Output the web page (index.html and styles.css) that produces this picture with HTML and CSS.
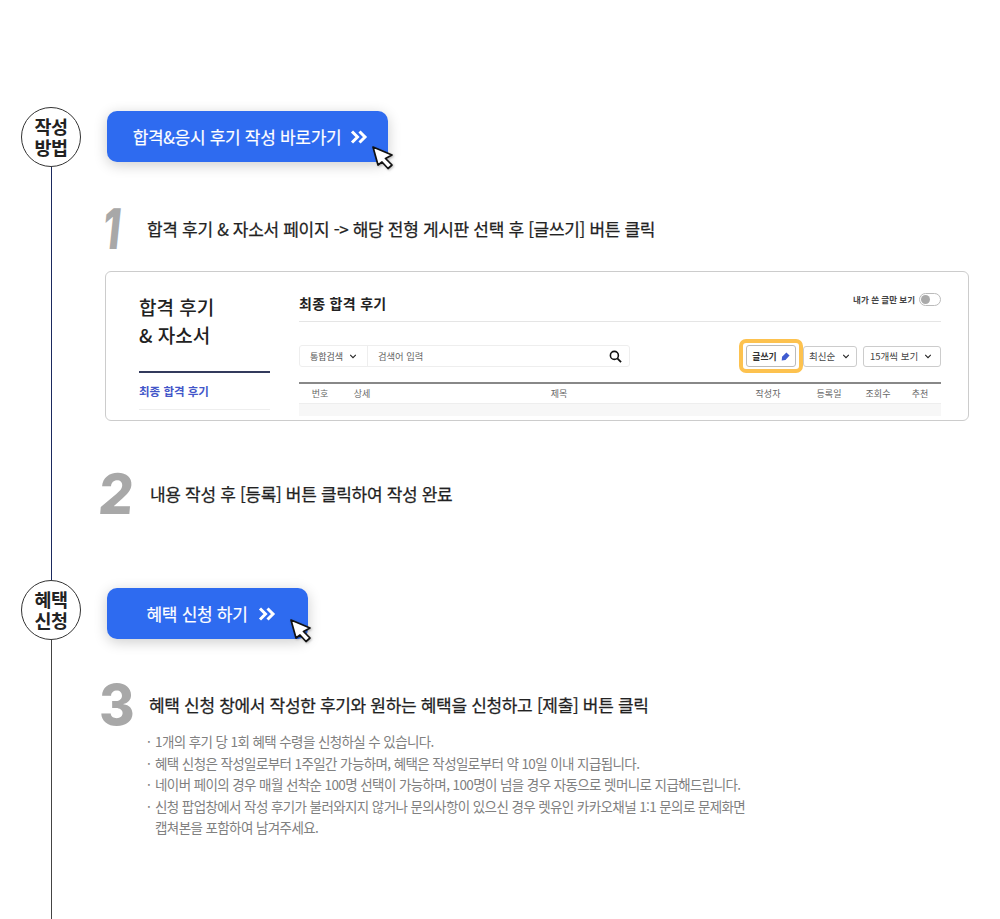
FILE: index.html
```html
<!DOCTYPE html>
<html lang="ko">
<head>
<meta charset="utf-8">
<title>후기 작성 방법</title>
<link rel="stylesheet" href="styles.css">
</head>
<body>
<main class="page">
  <section class="block block-first">
    <div class="rail">
      <div class="badge">작성<br>방법</div>
      <div class="rail-line rail-line-navy"></div>
    </div>
    <div class="content">
      <a class="cta cta-wide">
        <span>합격&amp;응시 후기 작성 바로가기</span>
        <svg class="chev" viewBox="0 0 18 14"><path d="M2 1.500 7.500 7 2 12.500M9.500 1.500 15 7 9.500 12.500" fill="none" stroke="#fff" stroke-width="3"/></svg>
        <svg class="cursor" viewBox="0 0 22 24"><path d="M1 1 20 9 13.500 12.500 20 19 16 22.500 10 16 6 19Z" fill="#fff" stroke="#111" stroke-width="1.700" stroke-linejoin="round"/></svg>
      </a>
      <div class="step step-one">
        <span class="num num-one">1</span>
        <p class="step-text">합격 후기 &amp; 자소서 페이지 -&gt; 해당 전형 게시판 선택 후 [글쓰기] 버튼 클릭</p>
      </div>
      <div class="card">
        <aside class="side">
          <h2 class="side-title">합격 후기<br>&amp; 자소서</h2>
          <div class="side-link">최종 합격 후기</div>
        </aside>
        <div class="board">
          <div class="board-head">
            <h3 class="board-title">최종 합격 후기</h3>
            <div class="mine">내가 쓴 글만 보기<span class="toggle"><i></i></span></div>
          </div>
          <div class="tools">
            <div class="search">
              <div class="search-type">통합검색
                <svg class="mini" viewBox="0 0 10 6"><path d="M1.500 1 5 4.500 8.500 1" fill="none" stroke="#222" stroke-width="1.300"/></svg>
              </div>
              <div class="search-input">검색어 입력</div>
              <svg class="glass" viewBox="0 0 14 14"><circle cx="5.800" cy="5.800" r="4.300" fill="none" stroke="#111" stroke-width="1.700"/><path d="M9 9 13 13" stroke="#111" stroke-width="1.900"/></svg>
            </div>
            <div class="write-ring">
              <div class="write">글쓰기
                <svg class="pen" viewBox="0 0 10 10"><path d="M6 .5 9.500 4 5 9 .8 9.500 1.200 5.200Z" fill="#3f5bd0"/></svg>
              </div>
            </div>
            <div class="select select-sort">최신순
              <svg class="mini" viewBox="0 0 10 6"><path d="M1.500 1 5 4.500 8.500 1" fill="none" stroke="#222" stroke-width="1.300"/></svg>
            </div>
            <div class="select select-count">15개씩 보기
              <svg class="mini" viewBox="0 0 10 6"><path d="M1.500 1 5 4.500 8.500 1" fill="none" stroke="#222" stroke-width="1.300"/></svg>
            </div>
          </div>
          <div class="thead">
            <span class="c-no">번호</span><span class="c-detail">상세</span><span class="c-title">제목</span><span class="c-author">작성자</span><span class="c-date">등록일</span><span class="c-views">조회수</span><span class="c-rec">추천</span>
          </div>
          <div class="tband"></div>
        </div>
      </div>
      <div class="step step-two">
        <span class="num num-two">2</span>
        <p class="step-text">내용 작성 후 [등록] 버튼 클릭하여 작성 완료</p>
      </div>
    </div>
  </section>
  <section class="block block-second">
    <div class="rail">
      <div class="badge">혜택<br>신청</div>
      <div class="rail-line"></div>
    </div>
    <div class="content">
      <a class="cta cta-narrow">
        <span>혜택 신청 하기</span>
        <svg class="chev" viewBox="0 0 18 14"><path d="M2 1.500 7.500 7 2 12.500M9.500 1.500 15 7 9.500 12.500" fill="none" stroke="#fff" stroke-width="3"/></svg>
        <svg class="cursor" viewBox="0 0 22 24"><path d="M1 1 20 9 13.500 12.500 20 19 16 22.500 10 16 6 19Z" fill="#fff" stroke="#111" stroke-width="1.700" stroke-linejoin="round"/></svg>
      </a>
      <div class="step step-three">
        <span class="num num-three">3</span>
        <p class="step-text">혜택 신청 창에서 작성한 후기와 원하는 혜택을 신청하고 [제출] 버튼 클릭</p>
      </div>
      <ul class="notes">
        <li>1개의 후기 당 1회 혜택 수령을 신청하실 수 있습니다.</li>
        <li>혜택 신청은 작성일로부터 1주일간 가능하며, 혜택은 작성일로부터 약 10일 이내 지급됩니다.</li>
        <li>네이버 페이의 경우 매월 선착순 100명 선택이 가능하며, 100명이 넘을 경우 자동으로 렛머니로 지급해드립니다.</li>
        <li>신청 팝업창에서 작성 후기가 불러와지지 않거나 문의사항이 있으신 경우 렛유인 카카오채널 1:1 문의로 문제화면<br>캡쳐본을 포함하여 남겨주세요.</li>
      </ul>
    </div>
  </section>
</main>
</body>
</html>
```
FILE: styles.css
```css
* { box-sizing: border-box; }
html, body { margin: 0; padding: 0; background: #fff; }
body { font-family: "Noto Sans CJK KR", "Noto Sans", sans-serif; color: #222; overflow: hidden; }
.page { width: 1000px; height: 919px; padding-top: 107px; overflow: hidden; }
.block { display: flex; padding-left: 21px; }
.block-first { height: 473px; }
.block-second { height: 339px; }
.rail { width: 60px; flex: none; display: flex; flex-direction: column; align-items: center; }
.badge { width: 60px; height: 60px; flex: none; border: 1px solid #333; border-radius: 50%; display: flex; align-items: center; justify-content: center; text-align: center; font-size: 18.500px; line-height: 21px; font-weight: 700; letter-spacing: -.5px; color: #222; background: #fff; }
.rail-line { flex: 1; width: 1px; background: #444; }
.rail-line-navy { background: #1b2a5e; }
.content { margin-left: 25px; flex: 1; min-width: 0; }
.cta { position: relative; display: flex; align-items: center; justify-content: center; height: 51px; margin-top: 4px; margin-left: 1px; border-radius: 10px; background: #2e6bf0; box-shadow: 0 3px 14px rgba(0,0,0,.2); color: #fff; font-size: 17px; font-weight: 400; letter-spacing: -.3px; -webkit-text-stroke: .2px #fff; }
.cta-wide { width: 281px; padding-left: 6px; }
.cta-narrow { width: 201px; padding-left: 8px; margin-top: 8px; }
.chev { width: 18px; height: 14px; margin-left: 9px; }
.cta-narrow .chev { margin-left: 11px; }
.cursor { position: absolute; width: 22px; height: 24px; filter: drop-shadow(1px 1px 1px rgba(0,0,0,.25)); }
.cta-wide .cursor { right: -6px; bottom: -8px; }
.cta-narrow .cursor { right: -4px; bottom: -4px; }
.step { display: flex; align-items: center; }
.num { display: block; flex: none; color: #a8a8a8; font-family: Inter, "Liberation Sans", sans-serif; font-weight: 800; line-height: 42px; height: 42px; font-size: 56px; transform-origin: left center; }
.num-one { width: 44px; margin-left: -3px; transform: skewX(-6deg) scaleX(.72); }
.num-two { width: 51px; margin-left: -2px; transform: skewX(-5deg) scaleX(.97); }
.num-three { width: 50px; margin-left: -2px; transform: scaleX(.97); }
.step-text { margin: 0 0 2px; font-size: 17px; line-height: 25px; letter-spacing: -.32px; color: #222; font-weight: 400; -webkit-text-stroke: .25px #222; }
.step-one { margin-top: 46px; }
.step-two { margin-top: 52px; margin-left: -5px; }
.step-three { margin-top: 45px; margin-left: -5px; }
.card { display: flex; width: 864px; height: 150px; margin-top: 21px; margin-left: -1px; padding: 0 27px 4px 33px; border: 1px solid #ccc; border-radius: 6px; overflow: hidden; background: #fff; }
.side { width: 131px; flex: none; }
.side-title { margin: 21px 0 0; height: 80px; font-size: 19px; line-height: 28px; font-weight: 500; color: #222; border-bottom: 2px solid #333a5c; }
.side-link { height: 37px; border-bottom: 1px solid #eee; font-size: 11.500px; font-weight: 700; line-height: 36px; color: #4356c9; letter-spacing: 0; }
.board { margin-left: 29px; flex: 1; min-width: 0; display: flex; flex-direction: column; }
.board-head { height: 50px; display: flex; justify-content: space-between; padding-top: 19px; border-bottom: 1px solid #e5e5e5; }
.board-title { margin: 0; font-size: 14px; line-height: 24px; font-weight: 700; color: #222; letter-spacing: .3px; }
.mine { display: flex; align-items: flex-start; gap: 4px; font-size: 8.500px; font-weight: 700; line-height: 16px; color: #444; }
.toggle { width: 22px; height: 13px; margin-top: 2px; border: 1px solid #bbb; border-radius: 7px; padding: 1px; }
.toggle i { display: block; width: 9px; height: 9px; border-radius: 50%; background: #aaa; }
.tools { display: flex; align-items: center; margin-top: 23px; height: 22px; }
.search { display: flex; align-items: center; width: 331px; height: 22px; border: 1px solid #eee; border-radius: 3px; }
.search-type { width: 68px; height: 100%; display: flex; align-items: center; justify-content: center; gap: 6px; border-right: 1px solid #eee; font-size: 9px; color: #555; white-space: nowrap; }
.search-input { flex: 1; padding-left: 10px; font-size: 9.300px; color: #666; }
.glass { width: 13px; height: 13px; margin-right: 7px; }
.mini { width: 8px; height: 5px; flex: none; }
.write-ring { margin-left: 109px; width: 64px; height: 34px; border: 4px solid #fdc24f; border-radius: 7px; background: #fff; padding: 2px 3px; flex: none; }
.write { height: 100%; border: 1px solid #bbb; border-radius: 3px; display: flex; align-items: center; justify-content: center; gap: 4px; font-size: 8.800px; font-weight: 700; color: #333; }
.pen { width: 9px; height: 9px; }
.select { height: 21px; border: 1px solid #ccc; border-radius: 3px; display: flex; align-items: center; justify-content: space-between; font-size: 9.500px; color: #444; white-space: nowrap; }
.select-sort { width: 54px; padding: 0 6px 0 5px; }
.select-count { width: 78px; margin-left: 6px; padding: 0 8px 0 6px; }
.thead { display: flex; margin-top: 15px; height: 22px; border-top: 2px solid #888; border-bottom: 1px solid #eee; font-size: 9px; line-height: 20px; color: #666; }
.thead span { text-align: center; flex: none; }
.c-no { width: 42px; }
.c-detail { width: 42px; }
.c-title { width: 352px; }
.c-author { width: 66px; }
.c-date { width: 56px; }
.c-views { width: 42px; }
.c-rec { width: 42px; }
.tband { height: 12px; background: #f7f7f7; }
.notes { list-style: none; margin: 5px 0 0 42px; padding: 0; font-size: 13.500px; line-height: 21.500px; color: #808080; letter-spacing: -.6px; }
.notes li { position: relative; padding-left: 7px; }
.notes li::before { content: "·"; position: absolute; left: -1px; top: 0; }
```
